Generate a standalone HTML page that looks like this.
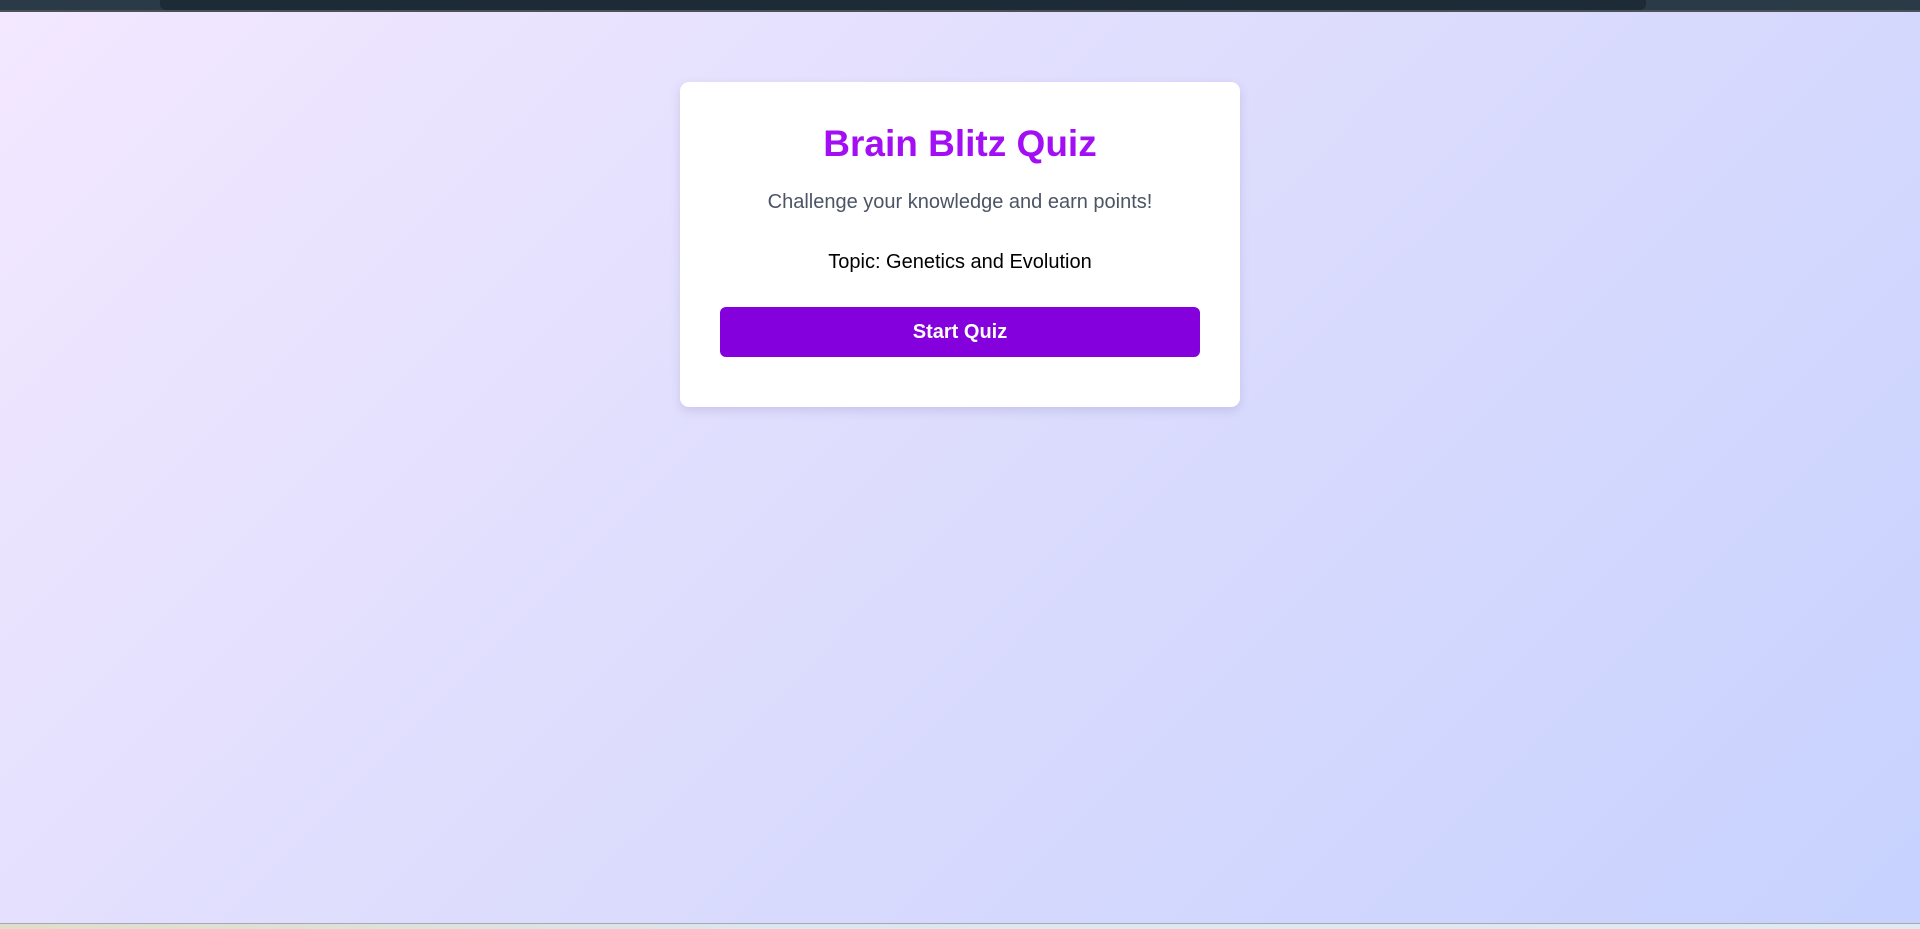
<!DOCTYPE html>
<html><head><meta charset="utf-8"><style>
*{margin:0;padding:0;box-sizing:border-box}
html,body{width:1920px;height:929px;overflow:hidden;font-family:"Liberation Sans",Arial,sans-serif}
.top{position:absolute;left:0;top:0;width:1920px;height:10px;background:#2a3b47}
.top .in{position:absolute;left:160px;right:274px;top:0;height:10px;background:#1c2b36;border-radius:0 0 6px 6px}
.line{position:absolute;left:0;top:10px;width:1920px;height:2px;background:#4a5157}
.bg{position:absolute;left:0;top:12px;width:1920px;height:911px;background:linear-gradient(135deg,#f3e8ff 0%,#dcdcfd 50%,#c7d2fe 100%)}
.bot{position:absolute;left:0;top:923px;width:1920px;height:6px;background:linear-gradient(90deg,#e0ddc9,#dce6ee 40%,#dfeaf2);border-top:1px solid #a8a8b0}
.card{position:absolute;left:680px;top:82px;width:560px;height:325px;background:#fff;border-radius:9px;box-shadow:0 4px 10px rgba(100,90,160,.18);text-align:center}
h1{position:absolute;left:0;right:0;top:40px;font-size:37px;line-height:44px;font-weight:bold;color:#a30ff4}
.sub{position:absolute;left:0;right:0;top:108px;font-size:20px;line-height:24px;color:#4b5563}
.topic{position:absolute;left:0;right:0;top:168px;font-size:20px;line-height:24px;color:#000}
.btn{position:absolute;left:40px;top:225px;width:480px;height:50px;background:#8400dc;border-radius:6px;color:#fff;font-weight:bold;font-size:20px;line-height:50px}
</style></head><body>
<div class="top"><div class="in"></div></div>
<div class="line"></div>
<div class="bg"></div>
<div class="bot"></div>
<div class="card">
<h1>Brain Blitz Quiz</h1>
<div class="sub">Challenge your knowledge and earn points!</div>
<div class="topic">Topic: Genetics and Evolution</div>
<div class="btn">Start Quiz</div>
</div>
</body></html>
